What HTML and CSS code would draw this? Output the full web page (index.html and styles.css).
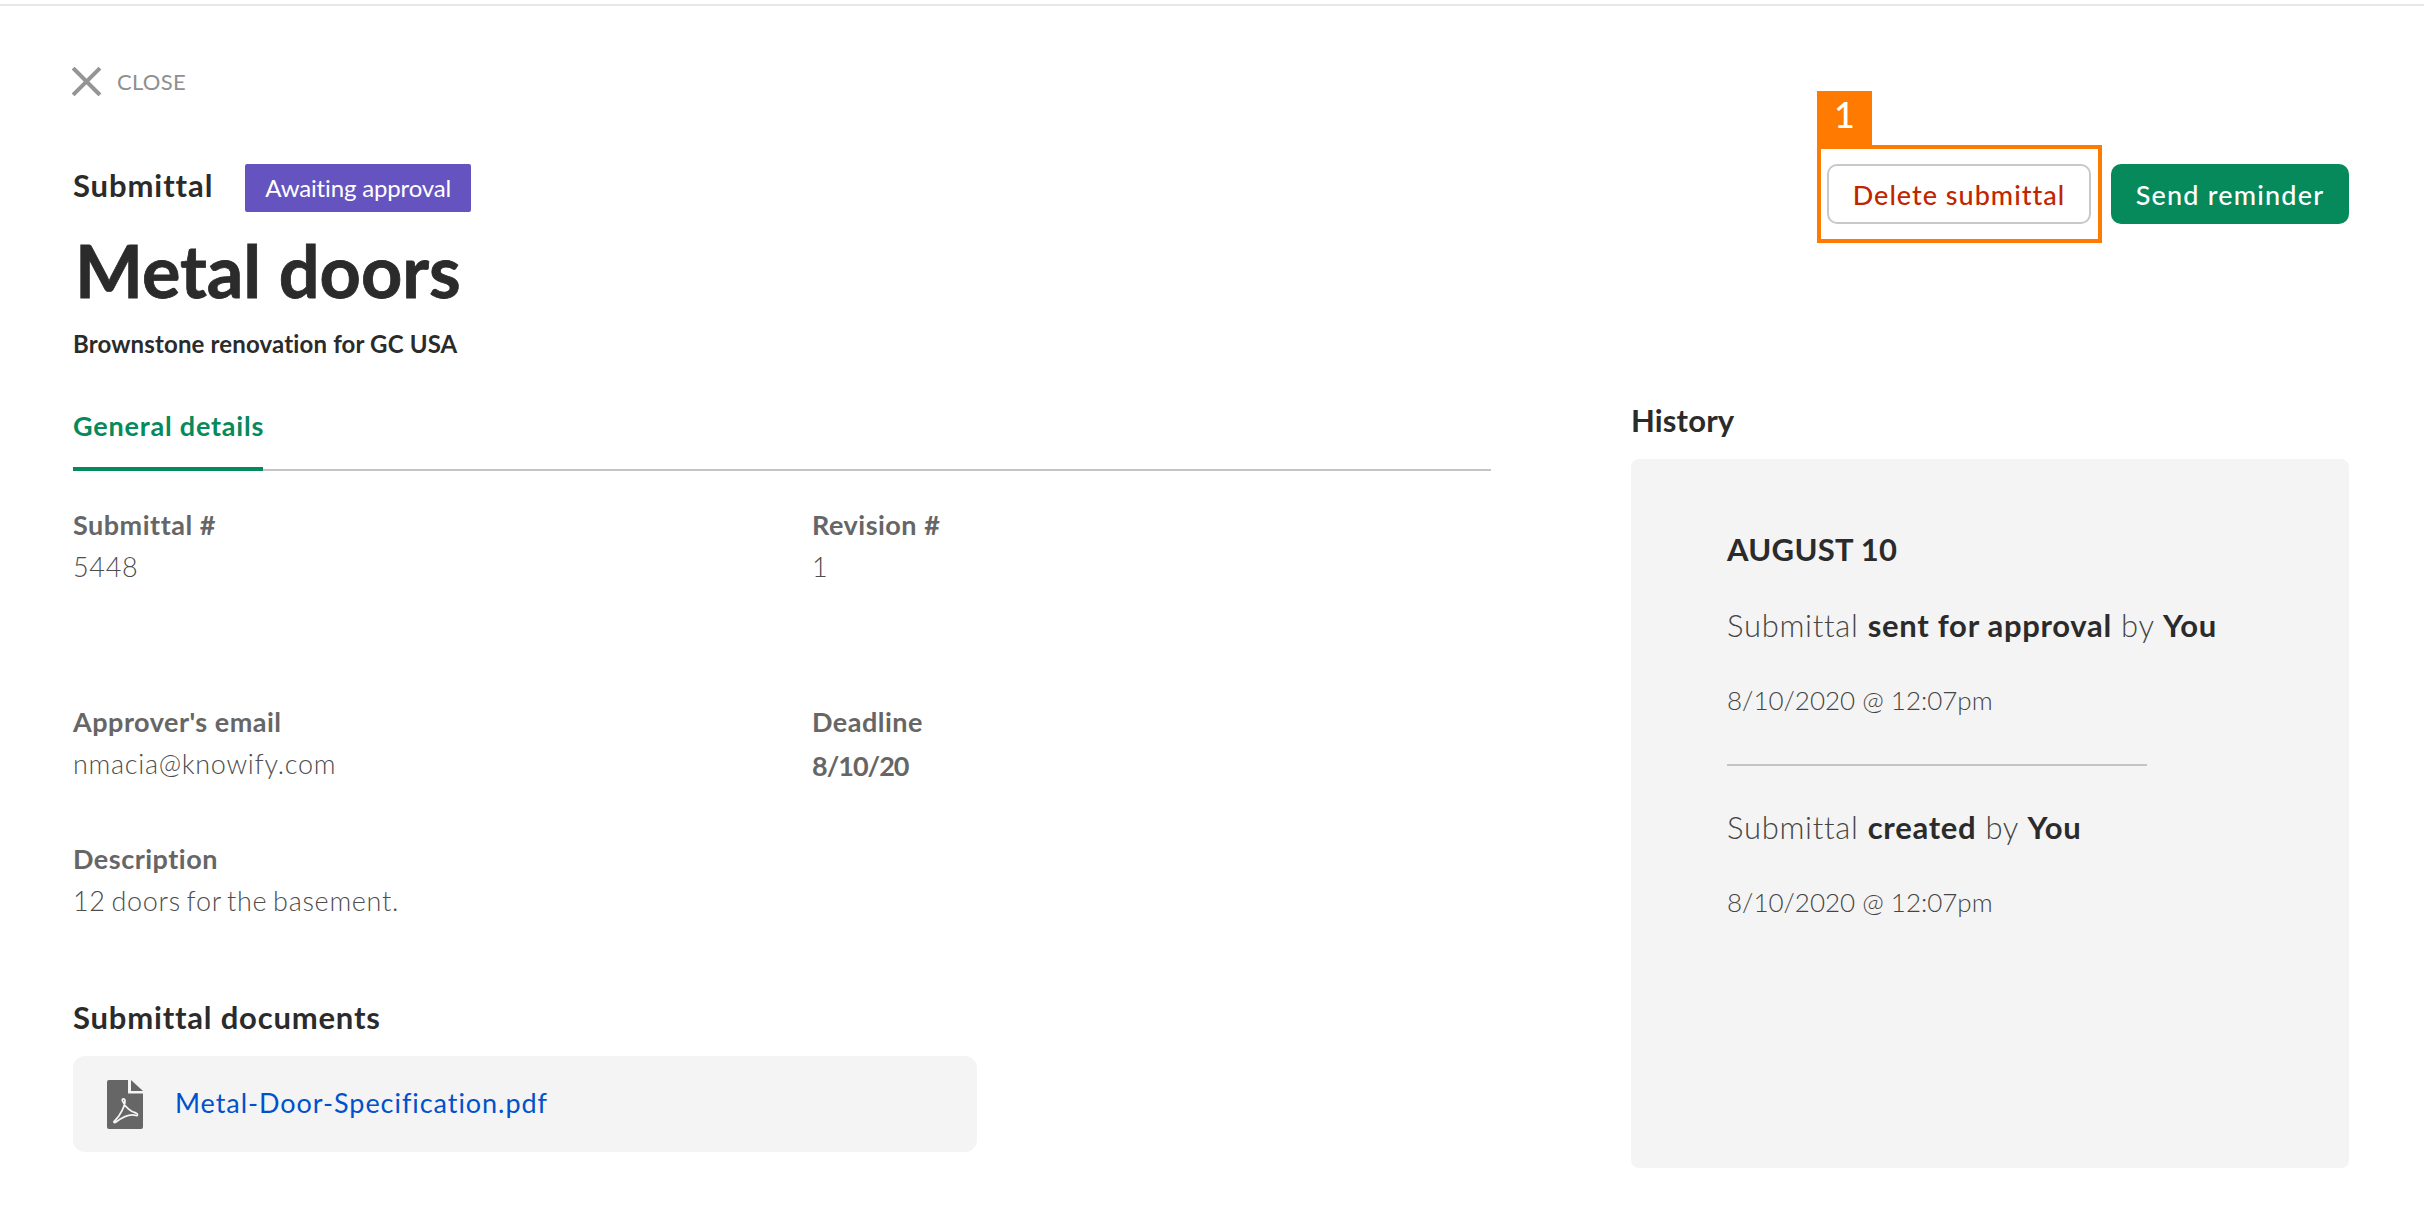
FILE: index.html
```html
<!DOCTYPE html>
<html lang="en">
<head>
<meta charset="utf-8">
<title>Metal doors</title>
<link rel="stylesheet" href="styles.css">
</head>
<body>
<div class="topbar"></div>
<div class="page">
  <a class="close">
    <svg class="close-icon" viewBox="0 0 27 27"><path d="M1.5 1.5 25.5 25.5M25.5 1.5 1.5 25.5"/></svg>
    <span>CLOSE</span>
  </a>
  <header class="head">
    <div class="head-left">
      <div class="kicker">
        <span class="kicker-text">Submittal</span>
        <span class="badge">Awaiting approval</span>
      </div>
      <h1 class="title">Metal doors</h1>
      <p class="project">Brownstone renovation for GC USA</p>
    </div>
    <div class="actions">
      <div class="annot">
        <span class="annot-tab">1</span>
        <button class="btn btn-outline">Delete submittal</button>
      </div>
      <button class="btn btn-primary">Send reminder</button>
    </div>
  </header>
  <main class="main">
    <section class="details">
      <div class="tabs"><span class="tab">General details</span></div>
      <div class="fields">
        <div class="field field-tall"><div class="label">Submittal #</div><div class="value">5448</div></div>
        <div class="field field-tall"><div class="label">Revision #</div><div class="value">1</div></div>
        <div class="field"><div class="label">Approver's email</div><div class="value">nmacia@knowify.com</div></div>
        <div class="field"><div class="label">Deadline</div><div class="value value-strong">8/10/20</div></div>
        <div class="field"><div class="label">Description</div><div class="value">12 doors for the basement.</div></div>
      </div>
      <h2 class="docs-title">Submittal documents</h2>
      <div class="doc">
        <svg class="doc-icon" viewBox="0 0 36 49">
          <path class="doc-body" d="M2 0H21V13.5H36V47a2 2 0 0 1-2 2H2a2 2 0 0 1-2-2V2a2 2 0 0 1 2-2Z"/>
          <path class="doc-body" d="M24 0 36 11H24Z"/>
          <path class="doc-glyph" d="M15.5 21C14.5 18.500 18 18 18 21 18 26 13 36 8 40.500 6 42 7 43.500 9 42 13 39 22 33 29 35.500 31 36 31 33.500 29 33 24 32 18 27 15.500 21Z"/>
        </svg>
        <a class="doc-link">Metal-Door-Specification.pdf</a>
      </div>
    </section>
    <aside class="history">
      <h2 class="history-title">History</h2>
      <div class="panel">
        <div class="panel-date">AUGUST 10</div>
        <p class="event">Submittal <b>sent for approval</b> by <b>You</b></p>
        <p class="stamp">8/10/2020 @ 12:07pm</p>
        <hr class="rule">
        <p class="event">Submittal <b>created</b> by <b>You</b></p>
        <p class="stamp">8/10/2020 @ 12:07pm</p>
      </div>
    </aside>
  </main>
</div>
</body>
</html>
```
FILE: styles.css
```css
* { box-sizing: border-box; }
html, body { margin: 0; padding: 0; background: #fff; }
body { font-family: "Lato", "Liberation Sans", sans-serif; color: #2b2b2b; }
.topbar { height: 6px; border-bottom: 2px solid #e8e8e8; }
.page { padding: 0 75px 0 73px; }

.close { display: flex; align-items: center; gap: 17px; padding-top: 61px; color: #8f8f8f; font-size: 22px; letter-spacing: 0.3px; line-height: 29px; }
.close-icon { width: 27px; height: 27px; overflow: visible; }
.close-icon path { fill: none; stroke: #959595; stroke-width: 4; stroke-linecap: square; }

.head { display: flex; justify-content: space-between; align-items: flex-start; margin-top: 68px; }
.kicker { display: flex; align-items: flex-start; gap: 32px; height: 48px; }
.kicker-text { font-size: 31px; font-weight: 700; letter-spacing: 0.9px; line-height: 42px; }
.badge { background: #6554c0; color: #fff; font-size: 24px; letter-spacing: -0.15px; line-height: 48px; width: 226px; padding-left: 20px; border-radius: 2px; white-space: nowrap; }
.title { margin: 14px 0 0; padding-left: 2px; font-size: 72px; font-weight: 700; line-height: 88px; -webkit-text-stroke: 0.8px #2b2b2b; }
.project { margin: 13px 0 0; font-size: 24px; font-weight: 700; letter-spacing: 0.15px; line-height: 34px; }

.actions { display: flex; align-items: flex-start; gap: 9px; }
.annot { position: relative; margin-top: -19px; padding: 15px 7px 15px 6px; border: 4px solid #ff7a00; }
.annot-tab { position: absolute; left: -4px; top: -58px; width: 55px; height: 54px; background: #ff7a00; color: #fff; font-size: 36px; font-weight: 500; line-height: 47px; text-align: center; }
.btn { display: block; height: 60px; padding: 0; border-radius: 10px; font-family: inherit; font-size: 27px; font-weight: 500; letter-spacing: 1px; }
.btn-outline { width: 264px; background: #fff; border: 2px solid #c8c8c8; color: #bf2600; }
.btn-primary { width: 238px; background: #06895b; border: 0; color: #fff; letter-spacing: 1.2px; }

.main { display: grid; grid-template-columns: 1418px 718px; column-gap: 140px; margin-top: 38px; }
.tabs { display: flex; align-items: flex-end; height: 72px; border-bottom: 2px solid #c4c4c4; }
.tab { width: 190px; height: 62px; margin-bottom: -2px; border-bottom: 4px solid #06895b; color: #06895b; font-size: 27px; font-weight: 700; letter-spacing: 0.8px; line-height: 34px; white-space: nowrap; }

.fields { display: grid; grid-template-columns: 739px 679px; row-gap: 53px; margin-top: 33px; }
.field-tall { min-height: 144px; }
.label { font-size: 27px; font-weight: 700; letter-spacing: 0.5px; line-height: 42px; color: #666; }
.value { font-size: 27px; font-weight: 300; letter-spacing: 0.7px; word-spacing: -2.3px; line-height: 42px; color: #4d4d4d; }
.value-strong { margin: 2px 0 -2px; font-weight: 700; letter-spacing: -1px; color: #666; }

.docs-title { margin: 74px 0 0; font-size: 31px; font-weight: 700; letter-spacing: 0.8px; line-height: 42px; }
.doc { display: flex; align-items: center; gap: 32px; width: 904px; height: 96px; margin-top: 18px; padding-left: 34px; background: #f4f4f4; border-radius: 12px; }
.doc-icon { width: 36px; height: 49px; flex: none; }
.doc-body { fill: #666; }
.doc-glyph { fill: none; stroke: #f4f4f4; stroke-width: 1.8; }
.doc-link { padding-bottom: 3px; color: #0052cc; font-size: 27px; letter-spacing: 0.95px; }

.history-title { margin: 0; font-size: 31px; font-weight: 700; letter-spacing: 0.15px; line-height: 42px; }
.panel { height: 709px; margin-top: 18px; padding: 72px 0 0 96px; background: #f4f4f4; border-radius: 8px; }
.panel-date { font-size: 31px; font-weight: 700; letter-spacing: 0.3px; line-height: 36px; }
.event { margin: 40px 0 0; font-size: 31px; font-weight: 300; letter-spacing: 0.7px; line-height: 36px; color: #444; }
.event b { font-weight: 700; color: #2b2b2b; }
.stamp { margin: 39px 0 0; font-size: 26px; font-weight: 300; line-height: 36px; color: #444; }
.rule { width: 420px; height: 2px; margin: 46px 0 0; border: 0; background: #c4c4c4; }
.rule + .event { margin-top: 43px; }
```
